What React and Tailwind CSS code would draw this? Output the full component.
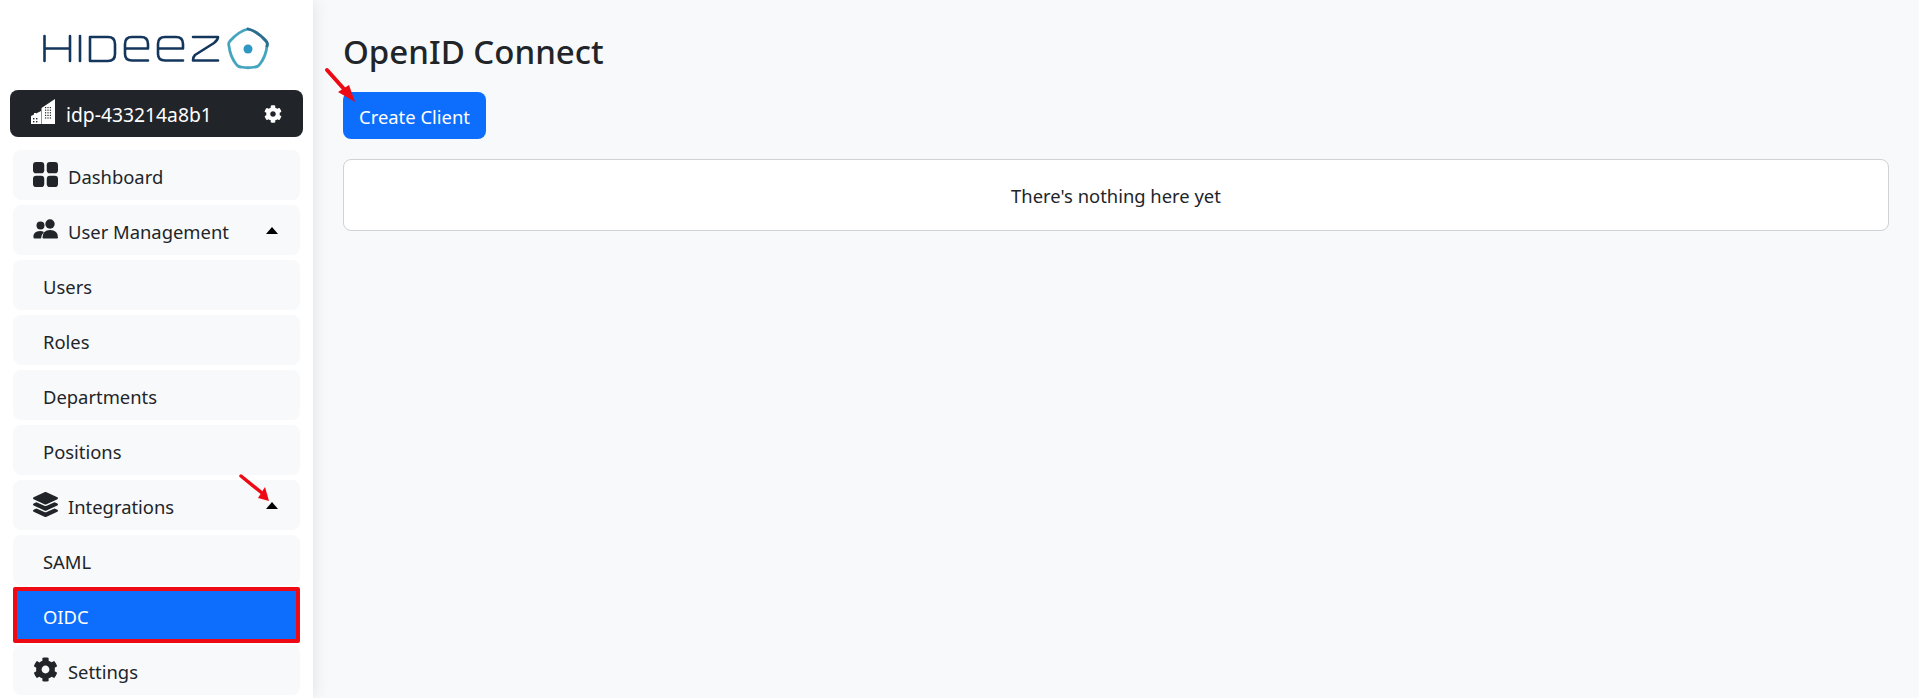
import { FaLayerGroup, FaCog } from "react-icons/fa";

function Caret() {
  return <span className="ml-auto mr-[22px] w-0 h-0 border-x-[6px] border-x-transparent border-b-[7px] border-b-black" />;
}

function GridIcon({ className }) {
  return (
    <svg className={className} viewBox="0 0 24 24" fill="currentColor">
      <rect x="0" y="0" width="10.8" height="10.8" rx="3" />
      <rect x="13.2" y="0" width="10.8" height="10.8" rx="3" />
      <rect x="0" y="13.2" width="10.8" height="10.8" rx="3" />
      <rect x="13.2" y="13.2" width="10.8" height="10.8" rx="3" />
    </svg>
  );
}

function UsersIcon({ className }) {
  return (
    <svg className={className} viewBox="0 0 25 25" fill="currentColor">
      <circle cx="7.500" cy="8.500" r="4" />
      <circle cx="17" cy="7" r="4.700" />
      <path d="M0.500 20.500Q0 14 7 14Q9.500 14 11 15Q8 18 8 21.500H1.500Q0.500 21.500 0.500 20.500Z" />
      <path d="M9.500 20.500Q9.500 13 17 13Q25 13 25 20.500Q25 21.500 24 21.500H10.500Q9.500 21.500 9.500 20.500Z" />
    </svg>
  );
}

function BuildingIcon({ className }) {
  const dots = [];
  for (let row = 0; row < 5; row++) {
    for (let col = 0; col < 3; col++) {
      dots.push(<rect key={`${row}-${col}`} x={14 + col * 2.4} y={8 + row * 2.6} width="1.2" height="1.2" fill="#212529" />);
    }
  }
  return (
    <svg className={className} viewBox="0 0 24 25" fill="currentColor">
      <path d="M0 17L3 15.5V14H5V14.5L10 12V25H0Z" />
      <path d="M10.500 9L24 0V25H10.500Z" />
      {dots}
      <rect x="2" y="19" width="1.4" height="1.4" fill="#212529" />
      <rect x="5" y="19" width="1.4" height="1.4" fill="#212529" />
      <rect x="2" y="22" width="1.4" height="1.4" fill="#212529" />
      <rect x="5" y="22" width="1.4" height="1.4" fill="#212529" />
    </svg>
  );
}

function NavItem({ icon: Icon, label, caret, active, outlined }) {
  return (
    <div
      className={`relative h-[50px] flex items-center rounded-lg ${
        active ? "bg-[#0d6efd] text-white" : "bg-[#f8f9fa] text-[#212529]"
      } ${Icon ? "pl-[20px]" : "pl-[30px]"}`}
    >
      {Icon && <Icon className="w-[25px] h-[25px] mr-[10px] -mt-0.5 shrink-0" />}
      <span className="pt-[3px]">{label}</span>
      {caret && <Caret />}
      {outlined && <span className="absolute inset-x-0 -inset-y-[3px] border-[4px] border-[#ee0a14] rounded-[2px]" />}
    </div>
  );
}

function Logo() {
  return (
    <svg width="228" height="50" viewBox="0 0 228 50" fill="none" strokeLinecap="round" strokeLinejoin="round">
      <g stroke="#14365c" strokeWidth="2.6">
        <path d="M1.500 12V37M27 12V37M1.500 24.500H27" />
        <path d="M37 12V37" />
        <path d="M47 13H65Q72 13 72 20V30Q72 37 65 37H47V13Z" />
        <path d="M105 36.500H89Q82 36.500 82 30V20Q82 13 89 13H98Q105 13 105 20V24.500H83" />
        <path d="M140 36.500H122Q115 36.500 115 30V20Q115 13 122 13H133Q140 13 140 20V24.500H116" />
        <path d="M150 13H175Q175 16 171 19L152 31Q150 33 150 36.500H175" />
      </g>
      <path d="M205 5Q214 7 223 17Q225 19 224 22Q223 32 217 40Q215 43 212 43Q205 44.500 198 43Q195 43 193 40Q187 32 186 22Q185 19 187 17Q196 7 205 5Z" stroke="#45a5bf" strokeWidth="2.800" />
      <path d="M205 5Q214 7 223 17Q225 19 224 22" stroke="#2f6d90" strokeWidth="2.800" />
      <circle cx="205" cy="25" r="4.500" fill="#2f97c4" />
    </svg>
  );
}

// coordinates are local to each arrow, they sit on top of the page
function RedArrow({ className, width, height, shaft, head, strokeWidth }) {
  return (
    <svg className={`absolute ${className}`} width={width} height={height} viewBox={`0 0 ${width} ${height}`}>
      <path d={shaft} stroke="#ee0a14" strokeWidth={strokeWidth} strokeLinecap="round" />
      <path d={head} fill="#ee0a14" />
    </svg>
  );
}

export default function App() {
  return (
    <div className="relative h-[698px] flex bg-[#f8f9fa] text-[18.4px] overflow-hidden font-['Noto_Sans','Open_Sans',sans-serif]">
      <aside className="w-[313px] shrink-0 bg-white shadow-[0_0_16px_rgba(0,0,0,0.1)] flex flex-col">
        <div className="h-[90px] pt-[24px] pl-[43px]">
          <Logo />
        </div>
        <div className="mx-[10px] h-[47px] bg-[#212529] text-white rounded-lg flex items-center pl-[21px] pr-[21px]">
          <BuildingIcon className="w-[24px] h-[25px] mr-[11px] -mt-1" />
          <span className="text-[19.3px] pt-[4px]">idp-433214a8b1</span>
          <FaCog className="w-[18px] h-[18px] ml-auto" />
        </div>
        <nav className="mt-[13px] px-[13px] flex flex-col gap-[5px]">
          <NavItem icon={GridIcon} label="Dashboard" />
          <NavItem icon={UsersIcon} label="User Management" caret />
          <NavItem label="Users" />
          <NavItem label="Roles" />
          <NavItem label="Departments" />
          <NavItem label="Positions" />
          <NavItem icon={FaLayerGroup} label="Integrations" caret />
          <NavItem label="SAML" />
          <NavItem label="OIDC" active outlined />
          <NavItem icon={FaCog} label="Settings" />
        </nav>
      </aside>
      <main className="flex-1 pl-[30px] pr-[30px] text-[#212529]">
        <h1 className="mt-[33px] mb-[21px] text-[33px] leading-[38px] font-medium">OpenID Connect</h1>
        <button className="block h-[47px] w-[143px] pt-[2px] rounded-lg bg-[#0d6efd] text-white">Create Client</button>
        <div className="mt-[20px] h-[72px] pt-[2px] bg-white border border-[#d0d2d4] rounded-lg flex items-center justify-center">
          There's nothing here yet
        </div>
      </main>
      <RedArrow
        className="left-[324px] top-[67px]"
        width={34}
        height={38}
        strokeWidth={4}
        shaft="M3 3L20 22"
        head="M14 25L25 18L31 35Z"
      />
      <RedArrow
        className="left-[238px] top-[473px]"
        width={32}
        height={30}
        strokeWidth={3.500}
        shaft="M3 3L24 20"
        head="M20 25L27 14L31 28Z"
      />
    </div>
  );
}
